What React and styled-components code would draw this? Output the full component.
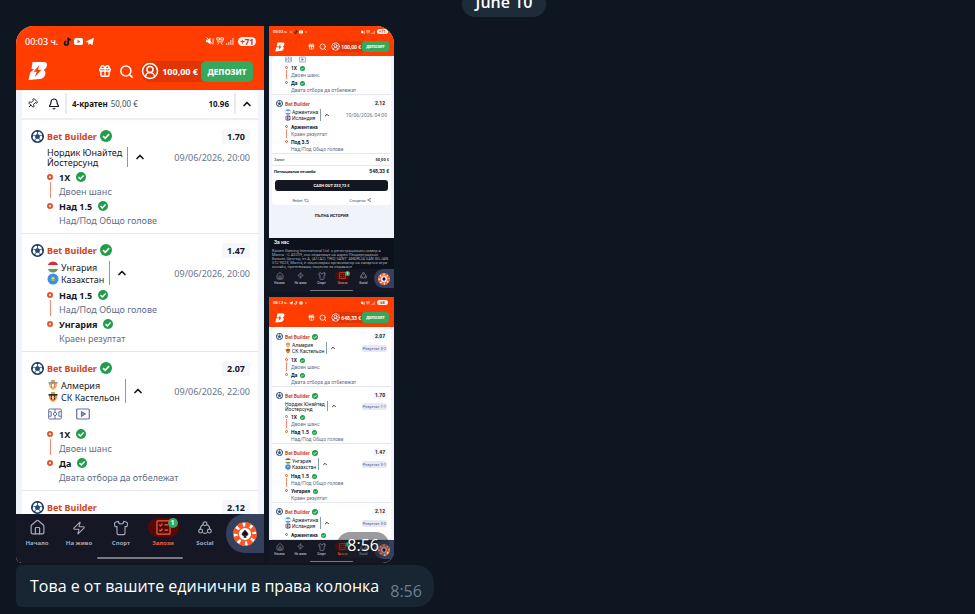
import React from "react";
import styled, { createGlobalStyle, ThemeProvider } from "styled-components";
import { Gift, Search, CircleUserRound, Pin, Bell, ChevronUp, House, Zap, Shirt, Repeat2, Share2 } from "lucide-react";

// every length in a shot has two values: the large one and the thumbnail one
const u = (large, thumb) => ({ theme }) => `${theme.thumb ? thumb : large}px`;

const bets = {
  nordic: {
    odds: "1.70",
    date: "09/06/2026, 20:00",
    teams: [{ name: "Нордик Юнайтед" }, { name: "Йостерсунд" }],
    picks: [["1X", "Двоен шанс"], ["Над 1.5", "Над/Под Общо голове"]],
  },
  hungary: {
    odds: "1.47",
    date: "09/06/2026, 20:00",
    teams: [{ name: "Унгария", flag: "hu" }, { name: "Казахстан", flag: "kz" }],
    picks: [["Над 1.5", "Над/Под Общо голове"], ["Унгария", "Краен резултат"]],
  },
  almeria: {
    odds: "2.07",
    date: "09/06/2026, 22:00",
    teams: [{ name: "Алмерия", flag: "alm" }, { name: "СК Кастельон", flag: "cas" }],
    picks: [["1X", "Двоен шанс"], ["Да", "Двата отбора да отбележат"]],
  },
  argentina: {
    odds: "2.12",
    date: "10/06/2026, 04:00",
    teams: [{ name: "Аржентина", flag: "ar" }, { name: "Исландия", flag: "is" }],
    picks: [["Аржентина", "Краен резултат"], ["Под 3.5", "Над/Под Общо голове"]],
  },
};

/* ---------- drawings ---------- */

const Logo = () => (
  <svg viewBox="0 0 20 19" fill="#fff">
    <path d="M4.500.500H16q3.400.300 3 3.400-.5 3.200-3.200 4.500 2.200 1.200 1.600 4-1 4.400-5.400 5.100L.5 18.500 2.200 11l4-3.600L3.500 7.500z" />
    <path d="M11.500 3.500 5.500 10.300h3.300L6.800 15.500l6.700-7.200H9.900z" fill="#ff3d00" />
  </svg>
);

const Ball = () => (
  <svg viewBox="0 0 26 26">
    <circle cx="13" cy="13" r="11.500" fill="#fff" stroke="#17375f" strokeWidth="3" />
    <path
      d="M13 8V4M17.500 11.500l4-1.500M16 17l2.500 3.500M10 17l-2.500 3.500M8.500 11.500l-4-1.500"
      stroke="#17375f"
      strokeWidth="1.400"
    />
    <path d="M13 8 17.800 11.500 16 17.200H10L8.200 11.500z" fill="#1d4f8c" stroke="#17375f" strokeWidth="1.200" />
    <path
      d="M9 1.500h8L13 4.800zM24 8.500v7l-3-4.500zM21.500 20l-5.500 4 1.800-4.500zM4.500 20 10 24l-1.800-4.500zM2 8.500v7L5 11z"
      fill="#17375f"
    />
  </svg>
);

const Check = () => (
  <svg viewBox="0 0 12 12">
    <circle cx="6" cy="6" r="6" fill="#1f9d49" />
    <path d="M3 6.200 5.200 8.300 9.100 4.100" fill="none" stroke="#fff" strokeWidth="1.800" />
  </svg>
);

const Pitch = () => (
  <svg viewBox="0 0 14 12" fill="none" stroke="#65709f" strokeWidth="1">
    <rect x=".7" y="1" width="12.600" height="10" rx="1" />
    <path d="M7 1v3M7 8v3M.7 3.800h2.500v4.400H.7M13.300 3.800h-2.500v4.400h2.500" />
    <circle cx="7" cy="6" r="1.600" />
  </svg>
);

const Video = () => (
  <svg viewBox="0 0 14 12" fill="none" stroke="#65709f" strokeWidth="1.200">
    <rect x=".7" y="1" width="12.600" height="10" rx="1" />
    <path d="M5.500 3.800 9.200 6 5.500 8.200z" fill="#9aa2c8" />
  </svg>
);

const Flag = ({ code }) => {
  if (code === "alm" || code === "cas") {
    const main = code === "alm" ? "#d9534a" : "#2b2623";
    return (
      <svg viewBox="0 0 12 12">
        <path d="M4 1h4v2H4z" fill="#e2a13c" />
        <path d="M2 3h8v3q0 3-4 5-4-2-4-5z" fill={code === "alm" ? "#e8b765" : "#f08a32"} />
        <path d="M4 4.500h1v4.500l-1-1zM7 4.500h1V8L7 9z" fill={main} />
        <circle cx="6" cy="6.500" r="1.400" fill={code === "alm" ? "#fff" : "#f9c79a"} />
        <path d="M1.500 3h9v1.600h-9z" fill={code === "alm" ? "#8f9196" : main} />
      </svg>
    );
  }
  return (
    <svg viewBox="0 0 12 12">
      <clipPath id={`flag-${code}`}>
        <circle cx="6" cy="6" r="5.500" />
      </clipPath>
      <g clipPath={`url(#flag-${code})`}>
        {code === "hu" && (
          <>
            <path d="M0 0h12v4H0z" fill="#cf2f42" />
            <path d="M0 4h12v4H0z" fill="#f3f3f3" />
            <path d="M0 8h12v4H0z" fill="#5f9e4a" />
          </>
        )}
        {code === "kz" && (
          <>
            <path d="M0 0h12v12H0z" fill="#3d8fe0" />
            <circle cx="6" cy="5.200" r="1.500" fill="#f2d34c" />
            <path d="M3.500 6q2.500 3 5 0 0 1.200-2.500 2.200-2.500-1-2.500-2.200z" fill="#f2d34c" />
          </>
        )}
        {code === "ar" && (
          <>
            <path d="M0 0h12v12H0z" fill="#4a9be8" />
            <path d="M0 4h12v4H0z" fill="#fff" />
            <circle cx="6" cy="6" r="1.300" fill="#f4c542" />
          </>
        )}
        {code === "is" && (
          <>
            <path d="M0 0h12v12H0z" fill="#1b4fa0" />
            <path d="M0 6h12M5 0v12" stroke="#fff" strokeWidth="3.600" />
            <path d="M0 6h12M5 0v12" stroke="#d5303f" strokeWidth="1.800" />
          </>
        )}
      </g>
    </svg>
  );
};

const Slip = () => (
  <svg viewBox="0 0 16 16" fill="none" stroke="currentColor" strokeWidth="1.300">
    <rect x="1" y="1" width="14" height="14" rx="1" />
    <path d="M3.500 5 4.700 6.200 7 3.800M3.500 10.500l1.200 1.200L7 9.300M9 5.300h4M9 10.800h4" />
  </svg>
);

const Social = () => (
  <svg viewBox="0 0 16 16" fill="none" stroke="currentColor" strokeWidth="1.300">
    <circle cx="8" cy="3.200" r="2.200" />
    <circle cx="3" cy="11.500" r="2.200" />
    <circle cx="13" cy="11.500" r="2.200" />
    <path d="M5.700 4Q2.600 5.800 2.600 9.200M10.300 4q3.100 1.800 3.100 5.200M5 13q3 2.200 6 0" />
  </svg>
);

const Chip = () => (
  <svg viewBox="0 0 24 24">
    <circle cx="12" cy="12" r="11.500" fill="#fff" />
    <circle cx="12" cy="12" r="9" fill="none" stroke="#f4592a" strokeWidth="6" strokeDasharray="4.700 2.370" />
    <circle cx="12" cy="12" r="6.800" fill="#fff" stroke="#f4592a" strokeWidth="1.400" />
    <path d="M12 8q.8 1.200 2.400 2.700 1.500 1.700-.2 2.900-1 .5-1.700-.300l.6 2.200h-2.200l.6-2.200q-.7.800-1.700.300-1.700-1.200-.2-2.900Q11.200 9.200 12 8z" fill="#10141f" stroke="#10141f" strokeWidth=".6" />
  </svg>
);

const TikTok = ({ dark }) => (
  <svg viewBox="0 0 9 9" fill="none" strokeWidth="1.700">
    <path d="M5.200.500v5.700a1.800 1.800 0 1 1-1.800-1.800M5.200 1q.5 1.900 2.600 2" stroke={dark ? "#17181d" : "#fff"} />
  </svg>
);

const YouTube = () => (
  <svg viewBox="0 0 9 9">
    <rect y="1" width="9" height="7" rx="1.800" fill="#fff" />
    <path d="M3.500 2.800 6.300 4.500 3.500 6.200z" fill="#ff3d00" />
  </svg>
);

const Plane = () => (
  <svg viewBox="0 0 9 9" fill="#fff">
    <path d="M0 4.700 9 .800 7.400 8.300 4.800 6.400 3.600 8.200 3.200 5.600z" />
  </svg>
);

const XMark = () => (
  <svg viewBox="0 0 9 9" fill="none" stroke="#ffd9cc" strokeWidth="1">
    <path d="M1 1 8 8M8 1 1 8" />
  </svg>
);

const Messenger = () => (
  <svg viewBox="0 0 9 9">
    <circle cx="4.500" cy="4.500" r="4" fill="#fff" />
    <path d="M2 5.500 4 3.800 5 4.800 7 3.500" fill="none" stroke="#ff3d00" />
  </svg>
);

const Dot = () => (
  <svg viewBox="0 0 9 9" fill="#fff">
    <circle cx="4.500" cy="4.500" r="1.500" />
  </svg>
);

const Muted = () => (
  <svg viewBox="0 0 9 9" fill="#fff">
    <path d="M0 3h2l3-2.500v8L2 6H0z" />
    <path d="M.5.500 8 8.500M8 1.500v6" stroke="#fff" />
  </svg>
);

const Network = () => (
  <svg viewBox="0 0 9 9" fill="none" stroke="#fff">
    <path d="M1 1h3v2.500H1zM5.500 1h3v2.500h-3zM1 5.500h7M3 7l-1 1.500M6 7l1 1.500" />
  </svg>
);

const Signal = () => (
  <svg viewBox="0 0 9 9" fill="#ffc7b5">
    <path d="M0 7h1.300v2H0zM2.400 5.500h1.300V9H2.400zM4.800 3.500h1.300V9H4.800zM7.200 1h1.300v8H7.200z" />
  </svg>
);

const trayIcons = {
  tiktok: <TikTok dark />,
  tiktokLight: <TikTok />,
  youtube: <YouTube />,
  telegram: <Plane />,
  x: <XMark />,
  messenger: <Messenger />,
  dot: <Dot />,
};

/* ---------- pieces of a shot ---------- */

const StatusBar = ({ time, tray, battery }) => (
  <Status>
    <span>{time}</span>
    {tray.map((name) => (
      <Icon key={name} $size={[9, 4]}>
        {trayIcons[name]}
      </Icon>
    ))}
    <Spacer />
    <Icon $size={[8, 4]}><Muted /></Icon>
    <Icon $size={[8, 4]}><Network /></Icon>
    <Icon $size={[8, 4]}><Signal /></Icon>
    <Battery>{battery}</Battery>
  </Status>
);

const Header = ({ balance }) => (
  <Top>
    <Icon $size={[20, 10]}><Logo /></Icon>
    <Spacer />
    <IconButton aria-label="gift"><Icon $size={[14, 7]}><Gift strokeWidth={2.3} /></Icon></IconButton>
    <IconButton aria-label="search"><Icon $size={[15, 8]}><Search strokeWidth={2.4} /></Icon></IconButton>
    <Wallet>
      <Icon $size={[18, 9]}><CircleUserRound strokeWidth={2} /></Icon>
      <Balance>{balance}</Balance>
      <Deposit>ДЕПОЗИТ</Deposit>
    </Wallet>
  </Top>
);

const Picks = ({ picks, pending }) => (
  <PickList>
    {picks.map(([name, market], i) => (
      <Pick key={name}>
        <Marker $line={i < picks.length - 1} />
        <div>
          <PickName>
            {name}
            {!pending && <Icon $size={[10, 5]}><Check /></Icon>}
          </PickName>
          {market && <Market>{market}</Market>}
        </div>
      </Pick>
    ))}
  </PickList>
);

const MediaRow = () => (
  <Extras>
    <IconButton aria-label="pitch"><Icon $size={[14, 7]}><Pitch /></Icon></IconButton>
    <IconButton aria-label="video"><Icon $size={[14, 7]}><Video /></Icon></IconButton>
  </Extras>
);

const BetHeader = ({ odds, checked }) => (
  <BetHead>
    <Icon $size={[13, 7]}><Ball /></Icon>
    <BetTitle>Bet Builder</BetTitle>
    {checked && <Icon $size={[12, 6]}><Check /></Icon>}
    <Spacer />
    <Odds>{odds}</Odds>
  </BetHead>
);

const Bet = ({ bet, picks = bet.picks, result, extras, pending }) => (
  <BetBox>
    <BetHeader odds={bet.odds} checked={!pending} />
    <Match>
      <Teams>
        {bet.teams.map(({ name, flag }) => (
          <Team key={name} $flag={!!flag}>
            {flag && <Icon $size={[12, 6]}><Flag code={flag} /></Icon>}
            {name}
          </Team>
        ))}
      </Teams>
      <IconButton aria-label="collapse"><Icon $size={[12, 6]}><ChevronUp strokeWidth={3.5} /></Icon></IconButton>
      <Spacer />
      {result ? <Result>{result}</Result> : <When>{bet.date}</When>}
    </Match>
    {extras && <MediaRow />}
    <Picks picks={picks} pending={pending} />
  </BetBox>
);

const NavBar = () => (
  <Nav>
    <Tabs>
      <Tab><TabIcon><Icon $size={[17, 8]}><House strokeWidth={1.7} /></Icon></TabIcon>Начало</Tab>
      <Tab><TabIcon><Icon $size={[14, 7]}><Zap strokeWidth={1.8} /></Icon></TabIcon>На живо</Tab>
      <Tab><TabIcon><Icon $size={[16, 8]}><Shirt strokeWidth={1.7} /></Icon></TabIcon>Спорт</Tab>
      <Tab $active>
        <TabIcon $active>
          <Icon $size={[15, 7]}><Slip /></Icon>
          <Count>1</Count>
        </TabIcon>
        Залози
      </Tab>
      <Tab><TabIcon><Icon $size={[14, 7]}><Social /></Icon></TabIcon>Social</Tab>
      <Casino aria-label="casino"><Icon $size={[24, 12]}><Chip /></Icon></Casino>
    </Tabs>
    <HomeBar />
  </Nav>
);

const Shot = ({ thumb, status, balance, children }) => (
  <ThemeProvider theme={{ thumb }}>
    <Frame>
      <StatusBar {...status} />
      <Header balance={balance} />
      <Screen>{children}</Screen>
      <NavBar />
    </Frame>
  </ThemeProvider>
);

const App = () => (
  <Chat>
    <GlobalStyle />
    <DateRow>
      <DateBadge>June 10</DateBadge>
    </DateRow>
    <Album>
      <Shot
        thumb={false}
        status={{ time: "00:03 ч.", tray: ["tiktok", "youtube", "telegram"], battery: "+71" }}
        balance="100,00 €"
      >
        <Card>
          <Summary>
            <SummaryTools>
              <IconButton aria-label="pin"><Icon $size={[11, 6]}><PinIcon /></Icon></IconButton>
              <IconButton aria-label="notify"><Icon $size={[12, 6]}><Bell strokeWidth={2.4} /></Icon></IconButton>
            </SummaryTools>
            <SummaryText>
              <b>4-кратен</b> 50,00 €
            </SummaryText>
            <b>10.96</b>
            <Toggle aria-label="collapse"><Icon $size={[12, 6]}><ChevronUp strokeWidth={3.5} /></Icon></Toggle>
          </Summary>
          <Bet bet={bets.nordic} />
          <Bet bet={bets.hungary} />
          <Bet bet={bets.almeria} extras />
          <BetBox>
            <BetHeader odds={bets.argentina.odds} />
          </BetBox>
        </Card>
      </Shot>
      <Side>
        <Shot
          thumb
          status={{ time: "00:03 ч.", tray: ["x", "tiktok", "youtube", "dot"], battery: "+71" }}
          balance="100,00 €"
        >
          <Card>
            <BetBox $cut>
              <MediaRow />
              <Picks picks={bets.almeria.picks} />
            </BetBox>
            <Bet bet={bets.argentina} pending />
            <Totals>
              <span>Залог</span>
              <b>50,00 €</b>
            </Totals>
            <Totals $strong>
              <b>Потенциални печалби</b>
              <Win>548,33 €</Win>
            </Totals>
            <CashOut>CASH OUT 233,73 €</CashOut>
            <Actions>
              <TextButton>Rebet <Icon $size={[10, 5]}><Repeat2 /></Icon></TextButton>
              <TextButton>Сподели <Icon $size={[8, 4]}><Share2 /></Icon></TextButton>
            </Actions>
          </Card>
          <History>ПЪЛНА ИСТОРИЯ</History>
          <About>
            <h2>За нас</h2>
            <p>
              Kaizen Gaming International Ltd. с регистрационен номер в Малта - C 43209, със седалище на адрес
              Пендерградънс Бизнес Център, ет.А, (A1/A2) TRIQ SANT’ ANDRIJA SAN ĠILJAN STJ 9023, Малта, е
              лицензиран организатор на хазартни игри онлайн, притежаващ лицензи за издаване
            </p>
          </About>
        </Shot>
        <Shot
          thumb
          status={{ time: "08:12 ч.", tray: ["telegram", "tiktokLight", "messenger", "dot"], battery: "68" }}
          balance="648,33 €"
        >
          <Card $offset>
            <Bet bet={bets.almeria} result="Резултат 3-2" />
            <Bet bet={bets.nordic} result="Резултат 1-1" />
            <Bet bet={bets.hungary} result="Резултат 3-1" />
            <Bet bet={bets.argentina} picks={[["Аржентина"]]} result="Резултат 3-0" />
          </Card>
        </Shot>
      </Side>
      <AlbumTime>8:56</AlbumTime>
    </Album>
    <Bubble>
      Това е от вашите единични в права колонка
      <time>8:56</time>
    </Bubble>
  </Chat>
);

const GlobalStyle = createGlobalStyle`
  *, *::before, *::after {
    box-sizing: border-box;
  }
  body {
    margin: 0;
    background: #0e1621;
    overflow: hidden;
  }
  button {
    font: inherit;
    color: inherit;
    background: none;
    border: 0;
    padding: 0;
    cursor: pointer;
  }
`;

const Chat = styled.main`
  font-family: "Open Sans", "Noto Sans", sans-serif;
  min-height: 100vh;
  margin-top: -9px;
  padding: 0 16px;
  background: #0e1621;
`;

const DateRow = styled.div`
  display: flex;
  justify-content: center;
  padding-left: 33px;
  margin-bottom: 9px;
`;

const DateBadge = styled.div`
  padding: 0 14px 4px;
  line-height: 22px;
  font-size: 16px;
  font-weight: 600;
  color: #fff;
  background: #1e2c3a;
  border-radius: 13px;
`;

const Album = styled.section`
  position: relative;
  display: flex;
  gap: 5px;
  width: fit-content;
  height: 537px;
  border-radius: 18px 18px 12px 6px;
  overflow: hidden;
`;

const Side = styled.div`
  display: flex;
  flex-direction: column;
  gap: 5px;
`;

const AlbumTime = styled.time`
  position: absolute;
  right: 5px;
  bottom: 5px;
  padding: 0 10px;
  line-height: 26px;
  font-size: 16px;
  color: #fff;
  background: rgba(30, 34, 40, 0.45);
  border-radius: 13px;
`;

const Bubble = styled.div`
  display: flex;
  align-items: center;
  gap: 11px;
  width: fit-content;
  height: 42px;
  margin-top: 2px;
  padding: 0 12px 0 14px;
  font-size: 16px;
  color: #fff;
  background: #182533;
  border-radius: 6px 18px 18px 6px;

  time {
    color: #6d7f8f;
    padding-top: 10px;
  }
`;

const Frame = styled.article`
  display: flex;
  flex-direction: column;
  flex: 1;
  min-height: 0;
  width: ${u(248, 125)};
  font-family: ${({ theme }) => (theme.thumb ? `Roboto, "Noto Sans"` : `"Noto Sans"`)}, sans-serif;
  font-size: ${u(9, 5)};
  color: #15181f;
  background: #f1f3fb;
  overflow: hidden;
`;

const Icon = styled.span`
  display: inline-flex;
  flex: none;
  width: ${({ $size, theme }) => $size[theme.thumb ? 1 : 0]}px;
  height: ${({ $size, theme }) => $size[theme.thumb ? 1 : 0]}px;

  svg {
    width: 100%;
    height: 100%;
  }
`;

const PinIcon = styled(Pin)`
  transform: rotate(45deg);
`;

const IconButton = styled.button`
  display: flex;
`;

const Spacer = styled.span`
  flex: 1;
`;

const Status = styled.div`
  display: flex;
  align-items: center;
  gap: ${u(2, 1)};
  flex: none;
  height: ${u(30, 11)};
  padding: 0 ${u(8, 6)} 0 ${u(9, 4)};
  font-size: ${u(9, 4)};
  font-weight: 500;
  color: #fff;
  background: #ff3d00;

  & > span:first-child {
    margin-right: ${u(3, 1)};
  }
`;

const Battery = styled.span`
  width: ${u(18, 11)};
  line-height: ${u(9, 5)};
  font-size: ${u(8, 4)};
  font-weight: 700;
  text-align: center;
  color: #b5431f;
  background: #fbeee9;
  border-radius: ${u(5, 3)};
  margin-left: ${u(2, 1)};
`;

const Top = styled.header`
  display: flex;
  align-items: center;
  gap: ${u(7, 4)};
  flex: none;
  height: ${u(34, 19)};
  padding: 0 ${u(11, 5)} ${u(4, 0)} ${u(12, 6)};
  color: #fff;
  background: #ff3d00;
`;

const Wallet = styled.div`
  display: flex;
  align-items: center;
  background: #e03505;
  border-radius: ${u(9, 5)};
`;

const Balance = styled.span`
  padding: 0 ${u(3, 1)};
  font-size: ${u(9, 5)};
  font-weight: 700;
`;

const Deposit = styled.button`
  && {
    width: ${u(52, 27)};
    height: ${u(21, 11)};
    font-size: ${u(8, 4)};
    font-weight: 800;
    color: #fff;
    background: #35a85c;
    border-radius: ${u(5, 3)};
  }
`;

const Screen = styled.div`
  display: flex;
  flex-direction: column;
  flex: 1;
  min-height: 0;
  overflow: hidden;
`;

const Card = styled.section`
  margin: 0 ${u(6, 3)};
  padding-top: ${({ $offset }) => ($offset ? 1 : 0)}px;
  background: #fff;
  border-radius: ${u(4, 3)};
`;

const Summary = styled.div`
  display: flex;
  align-items: center;
  gap: 5px;
  height: 30px;
  padding: 3px 0 4px 5px;
  font-size: 8px;
  border-bottom: 2px solid #eceff7;
`;

const SummaryTools = styled.div`
  display: flex;
  gap: 10px;
`;

const SummaryText = styled.span`
  flex: 1;
  align-self: stretch;
  display: flex;
  align-items: center;
  gap: 3px;
  padding-left: 5px;
  color: #454b58;
  border-left: 2px solid #e6eaf2;

  b {
    color: #15181f;
  }
`;

const Toggle = styled(IconButton)`
  align-self: stretch;
  align-items: center;
  && {
    padding: 0 5px;
    border-left: 2px solid #e6eaf2;
  }
`;

const BetBox = styled.div`
  padding: ${({ $cut, theme }) => ($cut ? 0 : theme.thumb ? 3 : 5)}px ${u(8, 4)} ${u(6, 0)} ${u(9, 4)};
  border-bottom: 1px solid #e4e7f1;
`;

const BetHead = styled.div`
  display: flex;
  align-items: center;
  gap: ${u(3, 2)};
  height: ${u(22, 11)};
`;

const BetTitle = styled.b`
  color: #d2451e;
`;

const Odds = styled.b`
  width: ${u(28, 14)};
  line-height: ${u(15, 7)};
  text-align: center;
  background: #f5f7fc;
  border-radius: ${u(3, 1)};
`;

const Match = styled.div`
  display: flex;
  align-items: center;
  gap: ${u(6, 3)};
  padding-left: ${u(16, 9)};
`;

const Teams = styled.div`
  padding-right: ${u(5, 2)};
  border-right: 1px solid #8d99b0;
`;

const Team = styled.div`
  display: flex;
  align-items: center;
  gap: ${u(2, 1)};
  height: ${({ $flag, theme }) => (theme.thumb ? ($flag ? 6 : 5) : $flag ? 12 : 10)}px;
  white-space: nowrap;
`;

const When = styled.time`
  color: #66748c;
  white-space: nowrap;
`;

const Result = styled.span`
  padding: 0 1px;
  line-height: 7px;
  font-size: 4px;
  color: #4d5a86;
  background: #e6e8f7;
  border-radius: 2px;
`;

const Extras = styled.div`
  display: flex;
  align-items: center;
  gap: ${u(14, 7)};
  height: ${u(21, 6)};
  padding-left: ${u(17, 9)};
`;

const PickList = styled.ul`
  list-style: none;
  margin: 0;
  padding: ${u(2, 2)} 0 0 ${u(16, 9)};
`;

const Pick = styled.li`
  display: flex;
  gap: ${u(6, 3)};
`;

const Marker = styled.i`
  display: flex;
  flex-direction: column;
  align-items: center;
  gap: ${u(2, 1)};
  padding-top: ${u(5, 2)};

  &::before {
    content: "";
    width: ${u(6, 3)};
    height: ${u(6, 3)};
    border: ${u(2, 1)} solid #e8532f;
    border-radius: 50%;
  }
  &::after {
    content: "";
    width: 1px;
    flex: 1;
    background: ${({ $line }) => ($line ? "#ee8a70" : "transparent")};
  }
`;

const PickName = styled.b`
  display: flex;
  align-items: center;
  gap: ${u(6, 3)};
  height: ${u(16, 8)};
`;

const Market = styled.div`
  line-height: ${u(13, 7)};
  color: #5f6f88;
  white-space: nowrap;
`;

const Totals = styled.div`
  display: flex;
  align-items: center;
  justify-content: space-between;
  height: 11px;
  padding: 0 2px;
  font-size: 4px;
  border-top: ${({ $strong }) => ($strong ? "1px solid #e4e7f1" : "0")};
`;

const Win = styled.b`
  font-size: 5px;
`;

const CashOut = styled.button`
  && {
    display: block;
    width: 113px;
    height: 11px;
    margin: 4px auto;
    font-size: 4px;
    font-weight: 700;
    color: #fff;
    background: #141722;
    border-radius: 3px;
  }
`;

const Actions = styled.div`
  display: flex;
  justify-content: space-around;
  height: 10px;
`;

const TextButton = styled.button`
  && {
    display: flex;
    align-items: center;
    gap: 1px;
    font-size: 4px;
    color: #4c566b;
  }
`;

const History = styled.div`
  line-height: 21px;
  margin-bottom: 12px;
  font-size: 4px;
  font-weight: 700;
  text-align: center;
`;

const About = styled.footer`
  flex: 1;
  padding: 0 2px 0 3px;
  color: #a9adb8;
  background: #0d111b;

  h2 {
    margin: 0 0 2px 2px;
    line-height: 9px;
    font-size: 5px;
    font-weight: 500;
    color: #fff;
  }
  p {
    margin: 0;
    line-height: 4px;
    font-size: 4px;
  }
`;

const Nav = styled.nav`
  flex: none;
  height: ${u(49, 23)};
  color: #a3a8bd;
  background: #151824;
`;

const Tabs = styled.div`
  display: flex;
  height: ${u(39, 19)};
`;

const Tab = styled.button`
  && {
    display: flex;
    flex-direction: column;
    align-items: center;
    flex: 1 1 0;
    min-width: 0;
    padding-top: ${u(4, 2)};
    font-size: ${u(6, 3)};
    line-height: ${u(12, 6)};
    font-weight: 700;
    white-space: nowrap;
    color: ${({ $active }) => ($active ? "#f0603c" : "inherit")};
  }
`;

const TabIcon = styled.span`
  position: relative;
  display: flex;
  align-items: center;
  justify-content: center;
  width: ${u(31, 15)};
  height: ${u(19, 9)};
  border-radius: ${u(10, 5)};
  background: ${({ $active }) => ($active ? "#550a08" : "none")};
`;

const Count = styled.span`
  position: absolute;
  top: 0;
  right: ${u(1, 0)};
  width: ${u(10, 5)};
  line-height: ${u(10, 5)};
  font-size: ${u(7, 4)};
  text-align: center;
  color: #fff;
  background: #35a85c;
  border-radius: 50%;
`;

const Casino = styled.button`
  && {
    display: flex;
    align-items: center;
    justify-content: center;
    width: ${u(38, 20)};
    background: #34405c;
    border-radius: ${u(19, 10)} 0 0 ${u(19, 10)};
  }
`;

const HomeBar = styled.div`
  width: ${u(86, 43)};
  height: ${u(2, 1)};
  margin: ${u(4, 2)} auto 0;
  background: #777a83;
  border-radius: 1px;
`;

export default App;
